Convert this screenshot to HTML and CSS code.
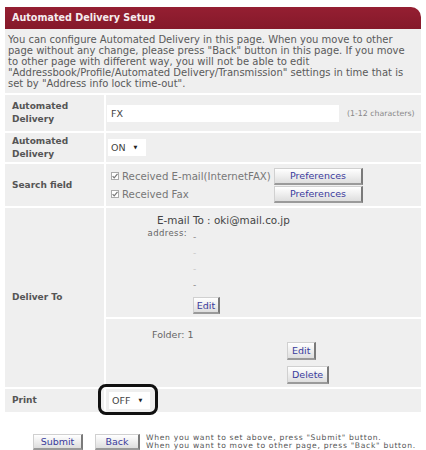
FILE: index.html
```html
<!DOCTYPE html>
<html>
<head>
<meta charset="utf-8">
<link rel="stylesheet" href="styles.css">
</head>
<body>
<div class="page">
  <div class="panel">
    <div class="title">Automated Delivery Setup</div>
    <div class="desc">You can configure Automated Delivery in this page. When you move to other page without any change, please press "Back" button in this page. If you move to other page with different way, you will not be able to edit "Addressbook/Profile/Automated Delivery/Transmission" settings in time that is set by "Address info lock time-out".</div>
    <div class="form">
      <div class="label">Automated Delivery</div>
      <div class="value name">
        <div class="input">FX</div>
        <span class="hint">(1-12 characters)</span>
      </div>

      <div class="label">Automated Delivery</div>
      <div class="value onoff">
        <div class="select">ON<span class="arrow">&#9660;</span></div>
      </div>

      <div class="label">Search field</div>
      <div class="value search">
        <div class="check-row">
          <span class="cb"><svg width="8" height="8" viewBox="0 0 8 8"><rect x="0.5" y="0.5" width="7" height="7" fill="#fff" stroke="#aaa"/><path d="M1.6 4.2 L3.2 5.9 L6.5 1.8" fill="none" stroke="#777" stroke-width="1.2"/></svg></span>
          <span class="cb-text">Received E-mail(InternetFAX)</span>
          <button class="btn pref">Preferences</button>
        </div>
        <div class="check-row">
          <span class="cb"><svg width="8" height="8" viewBox="0 0 8 8"><rect x="0.5" y="0.5" width="7" height="7" fill="#fff" stroke="#aaa"/><path d="M1.6 4.2 L3.2 5.9 L6.5 1.8" fill="none" stroke="#777" stroke-width="1.2"/></svg></span>
          <span class="cb-text">Received Fax</span>
          <button class="btn pref">Preferences</button>
        </div>
      </div>

      <div class="label deliver">Deliver To</div>
      <div class="value sub1">
        <div class="mail-line">E-mail To : oki@mail.co.jp</div>
        <div class="addr">
          <span class="addr-label">address:</span>
          <div class="dashes">
            <span>-</span>
            <span class="faint">-</span>
            <span class="faint">-</span>
            <span>-</span>
          </div>
        </div>
        <button class="btn edit1">Edit</button>
      </div>
      <div class="value sub2">
        <div class="folder">Folder: 1</div>
        <div class="folder-btns">
          <button class="btn">Edit</button>
          <button class="btn">Delete</button>
        </div>
      </div>

      <div class="label">Print</div>
      <div class="value print">
        <div class="select off">OFF<span class="arrow">&#9660;</span></div>
        <div class="highlight"></div>
      </div>
    </div>
  </div>
  <div class="actions">
    <button class="btn submit">Submit</button>
    <button class="btn back">Back</button>
    <div class="note">
      <div>When you want to set above, press "Submit" button.</div>
      <div>When you want to move to other page, press "Back" button.</div>
    </div>
  </div>
</div>
</body>
</html>
```

FILE: styles.css
```css
html, body {
  margin: 0;
  padding: 0;
  background: #fff;
}
body {
  font-family: "DejaVu Sans", Verdana, sans-serif;
  color: #555;
}
.page {
  padding: 7px 5px 0 5px;
  width: 416px;
}
.panel {
  display: flex;
  flex-direction: column;
}
.title {
  height: 22px;
  line-height: 22px;
  background: linear-gradient(#951f32, #85192a);
  color: #f6ecee;
  font-weight: bold;
  font-size: 9.6px;
  padding-left: 7px;
  border-radius: 0 10px 0 0;
}
.desc {
  background: #efefef;
  font-size: 10px;
  line-height: 11px;
  color: #5a5a5a;
  padding: 5px 4px 4px 3px;
  margin-bottom: 2px;
}
.form {
  display: grid;
  grid-template-columns: 99px 1fr;
  grid-template-rows: 36px 29px 42px 109px 68px 23px;
  gap: 2px;
}
.label {
  background: #efefef;
  font-weight: bold;
  font-size: 9px;
  line-height: 13px;
  color: #555;
  padding-left: 7px;
  padding-right: 20px;
  display: flex;
  align-items: center;
}
.value {
  background: #efefef;
  font-size: 9px;
  color: #555;
}
.deliver {
  grid-row: span 2;
}
.name {
  display: flex;
  align-items: center;
  padding-left: 1px;
}
.input {
  width: 228px;
  height: 17px;
  line-height: 17px;
  background: #fff;
  padding-left: 4px;
  font-size: 9.5px;
  color: #444;
}
.hint {
  font-size: 7.8px;
  color: #888;
  margin-left: 8px;
  white-space: nowrap;
}
.onoff {
  display: flex;
  align-items: center;
  padding-left: 2px;
}
.select {
  width: 35px;
  height: 17px;
  line-height: 17px;
  background: #fff;
  padding-left: 3px;
  font-size: 9.5px;
  color: #444;
  display: flex;
  align-items: center;
}
.arrow {
  font-size: 5px;
  color: #222;
  margin-left: 8px;
}
.search {
  display: flex;
  flex-direction: column;
  justify-content: center;
  gap: 1px;
  padding-left: 5px;
}
.check-row {
  display: flex;
  align-items: center;
  height: 17px;
}
.cb {
  display: flex;
  width: 8px;
  height: 8px;
  margin-right: 3px;
  flex: none;
}
.cb-text {
  font-size: 10.2px;
  color: #777;
  width: 152px;
  flex: none;
  white-space: nowrap;
}
.btn {
  font-family: "DejaVu Sans", Verdana, sans-serif;
  font-size: 9.5px;
  color: #3a3a9c;
  background: linear-gradient(#ffffff, #dedede);
  border: 1px solid #d0d0d0;
  border-right: 2px solid #7a7a7a;
  border-bottom: 2px solid #9a9a9a;
  padding: 0 4px;
  height: 17px;
  flex: none;
}
.pref {
  width: 89px;
  height: 17px;
}
.sub1 {
  display: flex;
  flex-direction: column;
  align-items: flex-start;
  padding-top: 6px;
}
.mail-line {
  font-size: 10.4px;
  line-height: 12px;
  color: #444;
  padding-left: 51px;
}
.addr {
  display: flex;
  align-items: flex-start;
  margin-top: 2px;
}
.addr-label {
  width: 44px;
  margin-left: 37px;
  text-align: right;
  font-size: 8.5px;
  letter-spacing: 0.4px;
  line-height: 10px;
  color: #666;
  white-space: nowrap;
}
.dashes {
  display: flex;
  flex-direction: column;
  margin-left: 6px;
  margin-top: 1px;
}
.dashes span {
  height: 16px;
  line-height: 16px;
  font-size: 9px;
  color: #888;
}
.dashes .faint {
  color: #c8c8c8;
}
.edit1 {
  margin-left: 87px;
  margin-top: 4px;
  width: 27px;
  height: 17px;
  padding: 0;
}
.sub2 {
  display: flex;
  flex-direction: column;
  padding-top: 10px;
}
.folder {
  font-size: 9.5px;
  line-height: 12px;
  color: #666;
  padding-left: 46px;
}
.folder-btns {
  display: flex;
  flex-direction: column;
  align-items: flex-start;
  gap: 6px;
  padding-left: 181px;
  margin-top: 1px;
}
.folder-btns .btn {
  height: 18px;
}
.print {
  position: relative;
  display: flex;
  align-items: center;
  padding-left: 3px;
}
.off {
  width: 38px;
}
.highlight {
  position: absolute;
  left: -8px;
  top: -5px;
  width: 54px;
  height: 25px;
  border: 3px solid #111;
  border-radius: 8px;
}
.actions {
  display: flex;
  align-items: center;
  padding-left: 28px;
  margin-top: 22px;
}
.submit {
  width: 50px;
  height: 16px;
}
.back {
  width: 45px;
  height: 16px;
  margin-left: 12px;
}
.note {
  margin-left: 6px;
  font-size: 7.6px;
  letter-spacing: 0.7px;
  line-height: 8px;
  color: #555;
  white-space: nowrap;
}
```
